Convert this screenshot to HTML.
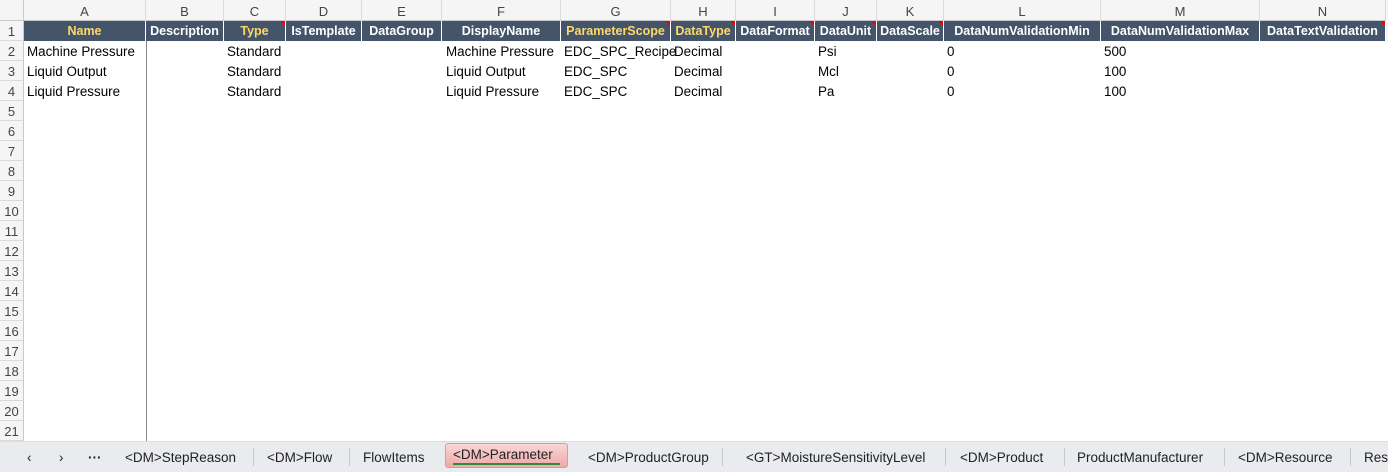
<!DOCTYPE html>
<html><head><meta charset="utf-8"><style>
*{margin:0;padding:0;box-sizing:border-box}
body{width:1388px;height:472px;overflow:hidden;background:#fff;font-family:"Liberation Sans",Arial,sans-serif;position:relative}
.a{position:absolute;white-space:nowrap}
.ch{top:0;height:21px;background:#f5f5f5;border-right:1px solid #dadada;border-bottom:1px solid #c8c8c8;color:#444;font-size:13px;text-align:center;line-height:23px}
.hd{top:21px;height:20px;background:#44546a;border-right:1px solid #fff;color:#fff;font-weight:bold;font-size:12.5px;text-align:center;line-height:21px;overflow:hidden}
.y{color:#ffd966}
.tri:after{content:"";position:absolute;right:0;top:0;border-top:5px solid #e00;border-left:5px solid transparent}
.rh{left:0;width:24px;height:20px;background:#f5f5f5;border-right:1px solid #c8c8c8;border-bottom:1px solid #dadada;color:#444;font-size:13px;text-align:center;line-height:22px}
.c{font-size:13.4px;line-height:22px;color:#000}
.tabs{left:0;top:441px;width:1388px;height:31px;background:#e9ebef;border-top:1px solid #dcdde0}
.t{top:442px;height:31px;line-height:31px;font-size:13.5px;color:#222}
.sep{top:448px;width:1px;height:18px;background:#c8c8c8}
</style></head><body>
<div class="a" style="left:0;top:0;width:24px;height:21px;background:#f5f5f5;border-right:1px solid #c8c8c8;border-bottom:1px solid #c8c8c8"></div>
<div id="g"></div>
<div class="a" style="left:146px;top:41px;width:1px;height:400px;background:#888"></div>
<div class="a tabs"></div>
<div class="a t" style="left:27px">&#8249;</div>
<div class="a t" style="left:59px">&#8250;</div>
<div class="a t" style="left:88px;font-weight:bold">···</div>
<div class="a t" style="left:125px">&lt;DM&gt;StepReason</div>
<div class="a sep" style="left:253px"></div>
<div class="a t" style="left:267px">&lt;DM&gt;Flow</div>
<div class="a sep" style="left:349px"></div>
<div class="a t" style="left:363px">FlowItems</div>
<div class="a" style="left:445px;top:443px;width:123px;height:25px;background:linear-gradient(#f9d7d6,#eda9a8);border:1px solid #d89a9a;border-radius:3px"></div>
<div class="a" style="left:453px;top:463px;width:107px;height:2px;background:#2e8b3e"></div>
<div class="a t" style="left:453px;top:439px">&lt;DM&gt;Parameter</div>
<div class="a t" style="left:588px">&lt;DM&gt;ProductGroup</div>
<div class="a sep" style="left:722px"></div>
<div class="a t" style="left:746px">&lt;GT&gt;MoistureSensitivityLevel</div>
<div class="a sep" style="left:945px"></div>
<div class="a t" style="left:960px">&lt;DM&gt;Product</div>
<div class="a sep" style="left:1064px"></div>
<div class="a t" style="left:1077px">ProductManufacturer</div>
<div class="a sep" style="left:1224px"></div>
<div class="a t" style="left:1238px">&lt;DM&gt;Resource</div>
<div class="a sep" style="left:1350px"></div>
<div class="a t" style="left:1364px">Reso</div>
<script>
var cols=[[24,146,"A","Name",1,0],[146,224,"B","Description",0,0],[224,286,"C","Type",1,1],[286,362,"D","IsTemplate",0,0],[362,442,"E","DataGroup",0,0],[442,561,"F","DisplayName",0,0],[561,671,"G","ParameterScope",1,1],[671,736,"H","DataType",1,1],[736,815,"I","DataFormat",0,1],[815,877,"J","DataUnit",0,1],[877,944,"K","DataScale",0,1],[944,1101,"L","DataNumValidationMin",0,0],[1101,1260,"M","DataNumValidationMax",0,0],[1260,1386,"N","DataTextValidation",0,1]];
var h="";
cols.forEach(function(c){var w=c[1]-c[0];
h+='<div class="a ch" style="left:'+c[0]+'px;width:'+w+'px">'+c[2]+'</div>';
h+='<div class="a hd'+(c[4]?' y':'')+(c[5]?' tri':'')+'" style="left:'+c[0]+'px;width:'+w+'px">'+c[3]+'</div>';});
h+='<div class="a" style="left:1386px;top:0;width:2px;height:41px;background:#f5f5f5"></div>';
for(var r=1;r<=21;r++){h+='<div class="a rh" style="top:'+(21+(r-1)*20)+'px">'+r+'</div>';}
var data=[["Machine Pressure","Standard","Machine Pressure","EDC_SPC_Recipe","Decimal","Psi","0","500"],["Liquid Output","Standard","Liquid Output","EDC_SPC","Decimal","Mcl","0","100"],["Liquid Pressure","Standard","Liquid Pressure","EDC_SPC","Decimal","Pa","0","100"]];
var xs=[27,227,446,564,674,818,947,1104];
data.forEach(function(d,i){d.forEach(function(v,j){h+='<div class="a c" style="left:'+xs[j]+'px;top:'+(41+i*20)+'px">'+v+'</div>';});});
document.getElementById("g").innerHTML=h;
</script>
</body></html>
